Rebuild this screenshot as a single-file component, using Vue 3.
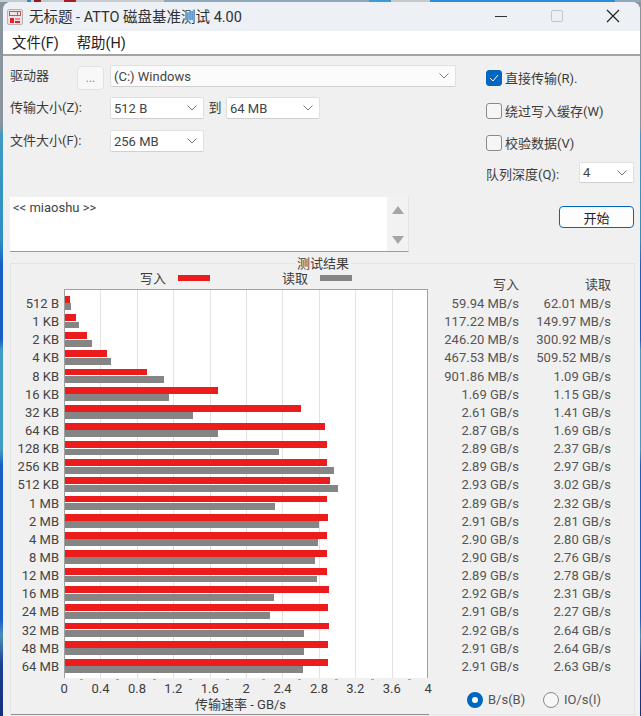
<template>
  <div class="desktop">
    <div class="window">
      <!-- 标题栏 -->
      <div class="titlebar">
        <svg class="app-icon" width="16" height="16" viewBox="0 0 16 16">
          <rect x="0.5" y="0.5" width="15" height="15" rx="1.5" fill="#e9e4e4" stroke="#b9b4b4" />
          <rect x="2" y="2" width="12" height="5" fill="#c9555a" />
          <rect x="3" y="3" width="7" height="3" fill="#f0e4e4" />
          <rect x="11" y="3" width="2" height="3" fill="#f0e4e4" />
          <rect x="3" y="9" width="4" height="5" fill="#e3222b" />
          <rect x="8" y="9" width="5" height="2" fill="#e98a90" />
          <rect x="8" y="12" width="5" height="2" fill="#e3222b" />
        </svg>
        <span class="title-text">无标题 - ATTO 磁盘基准测试 4.00</span>
        <div class="win-buttons">
          <svg width="14" height="14" viewBox="0 0 14 14"><path d="M1 7.5H13" stroke="#333" stroke-width="1.2" fill="none" /></svg>
          <svg width="14" height="14" viewBox="0 0 14 14"><rect x="1.5" y="1.5" width="11" height="11" rx="1.5" stroke="#c2c5c9" fill="none" /></svg>
          <svg width="14" height="14" viewBox="0 0 14 14"><path d="M1 1L13 13M13 1L1 13" stroke="#222" stroke-width="1.2" fill="none" /></svg>
        </div>
      </div>

      <div class="menubar">
        <span>文件(F)</span>
        <span>帮助(H)</span>
      </div>

      <div class="body">
        <div class="top">
          <!-- 左侧表单 -->
          <div class="form">
            <div class="row first">
              <label class="lbl-short">驱动器</label>
              <button class="dots">...</button>
              <div class="select drive">
                <span>(C:) Windows</span>
                <svg class="chev" width="10" height="6" viewBox="0 0 10 6"><path d="M0.5 0.5L5 5L9.5 0.5" /></svg>
              </div>
            </div>
            <div class="row second">
              <label class="lbl">传输大小(Z):</label>
              <div class="select small">
                <span>512 B</span>
                <svg class="chev" width="10" height="6" viewBox="0 0 10 6"><path d="M0.5 0.5L5 5L9.5 0.5" /></svg>
              </div>
              <span class="to">到</span>
              <div class="select small">
                <span>64 MB</span>
                <svg class="chev" width="10" height="6" viewBox="0 0 10 6"><path d="M0.5 0.5L5 5L9.5 0.5" /></svg>
              </div>
            </div>
            <div class="row third">
              <label class="lbl">文件大小(F):</label>
              <div class="select small">
                <span>256 MB</span>
                <svg class="chev" width="10" height="6" viewBox="0 0 10 6"><path d="M0.5 0.5L5 5L9.5 0.5" /></svg>
              </div>
            </div>
            <div class="desc">
              <div class="desc-text">&lt;&lt; miaoshu &gt;&gt;</div>
              <div class="scroll">
                <svg width="12" height="8" viewBox="0 0 12 8"><path d="M6 0L12 8H0Z" fill="#a6a6a6" /></svg>
                <svg width="12" height="8" viewBox="0 0 12 8"><path d="M0 0H12L6 8Z" fill="#a6a6a6" /></svg>
              </div>
            </div>
          </div>

          <!-- 右侧选项 -->
          <div class="options">
            <div class="check-row one">
              <span class="box checked">
                <svg width="10" height="8" viewBox="0 0 10 8"><path d="M1 4L4 7L9 1" stroke="#fff" stroke-width="1" fill="none" /></svg>
              </span>
              <span class="check-text">直接传输(R).</span>
            </div>
            <div class="check-row two">
              <span class="box"></span>
              <span class="check-text">绕过写入缓存(W)</span>
            </div>
            <div class="check-row three">
              <span class="box"></span>
              <span class="check-text">校验数据(V)</span>
            </div>
            <div class="queue">
              <span>队列深度(Q):</span>
              <div class="select tiny">
                <span>4</span>
                <svg class="chev" width="10" height="6" viewBox="0 0 10 6"><path d="M0.5 0.5L5 5L9.5 0.5" /></svg>
              </div>
            </div>
            <button class="start">开始</button>
          </div>
        </div>

        <!-- 测试结果 -->
        <div class="group">
          <span class="group-title">测试结果</span>
          <div class="chart">
            <div class="legend">
              <span>写入</span>
              <i class="swatch write"></i>
              <span class="legend-read">读取</span>
              <i class="swatch read"></i>
            </div>
            <div class="chart-main">
              <div class="labels">
                <div v-for="r in rows" :key="r.size" class="size-label">{{ r.size }}</div>
              </div>
              <div class="plot">
                <div v-for="r in rows" :key="r.size" class="bar-row">
                  <div class="bar write" :style="{ width: pct(r.w) }"></div>
                  <div class="bar read" :style="{ width: pct(r.r) }"></div>
                </div>
              </div>
            </div>
            <div class="tick-marks"></div>
            <div class="axis">
              <span v-for="t in ticks" :key="t">{{ t }}</span>
            </div>
            <div class="axis-title">传输速率 - GB/s</div>
          </div>

          <div class="results">
            <div class="res-row res-head">
              <span>写入</span>
              <span>读取</span>
            </div>
            <div v-for="r in rows" :key="r.size" class="res-row">
              <span>{{ r.wText }}</span>
              <span>{{ r.rText }}</span>
            </div>
            <div class="units">
              <span class="radio on"></span>
              <span class="unit-text">B/s(B)</span>
              <span class="radio"></span>
              <span class="unit-text">IO/s(I)</span>
            </div>
          </div>
        </div>
      </div>
    </div>
  </div>
</template>

<script setup>
const ticks = ['0', '0.4', '0.8', '1.2', '1.6', '2', '2.4', '2.8', '3.2', '3.6', '4'];

// 数值单位 GB/s，用来算柱子长度
const rows = [
  { size: '512 B', w: 0.0599, r: 0.062, wText: '59.94 MB/s', rText: '62.01 MB/s' },
  { size: '1 KB', w: 0.117, r: 0.15, wText: '117.22 MB/s', rText: '149.97 MB/s' },
  { size: '2 KB', w: 0.246, r: 0.301, wText: '246.20 MB/s', rText: '300.92 MB/s' },
  { size: '4 KB', w: 0.468, r: 0.51, wText: '467.53 MB/s', rText: '509.52 MB/s' },
  { size: '8 KB', w: 0.902, r: 1.09, wText: '901.86 MB/s', rText: '1.09 GB/s' },
  { size: '16 KB', w: 1.69, r: 1.15, wText: '1.69 GB/s', rText: '1.15 GB/s' },
  { size: '32 KB', w: 2.61, r: 1.41, wText: '2.61 GB/s', rText: '1.41 GB/s' },
  { size: '64 KB', w: 2.87, r: 1.69, wText: '2.87 GB/s', rText: '1.69 GB/s' },
  { size: '128 KB', w: 2.89, r: 2.37, wText: '2.89 GB/s', rText: '2.37 GB/s' },
  { size: '256 KB', w: 2.89, r: 2.97, wText: '2.89 GB/s', rText: '2.97 GB/s' },
  { size: '512 KB', w: 2.93, r: 3.02, wText: '2.93 GB/s', rText: '3.02 GB/s' },
  { size: '1 MB', w: 2.89, r: 2.32, wText: '2.89 GB/s', rText: '2.32 GB/s' },
  { size: '2 MB', w: 2.91, r: 2.81, wText: '2.91 GB/s', rText: '2.81 GB/s' },
  { size: '4 MB', w: 2.9, r: 2.8, wText: '2.90 GB/s', rText: '2.80 GB/s' },
  { size: '8 MB', w: 2.9, r: 2.76, wText: '2.90 GB/s', rText: '2.76 GB/s' },
  { size: '12 MB', w: 2.89, r: 2.78, wText: '2.89 GB/s', rText: '2.78 GB/s' },
  { size: '16 MB', w: 2.92, r: 2.31, wText: '2.92 GB/s', rText: '2.31 GB/s' },
  { size: '24 MB', w: 2.91, r: 2.27, wText: '2.91 GB/s', rText: '2.27 GB/s' },
  { size: '32 MB', w: 2.92, r: 2.64, wText: '2.92 GB/s', rText: '2.64 GB/s' },
  { size: '48 MB', w: 2.91, r: 2.64, wText: '2.91 GB/s', rText: '2.64 GB/s' },
  { size: '64 MB', w: 2.91, r: 2.63, wText: '2.91 GB/s', rText: '2.63 GB/s' }
];

const pct = (v) => (v / 4) * 100 + '%';
</script>

<style>
html,
body {
  margin: 0;
  background: #3f8fd0;
}
</style>

<style scoped>
.desktop {
  width: 641px;
  height: 716px;
  box-sizing: border-box;
  padding: 2px 1px 0 3px;
  overflow: hidden;
  /* 窗口后面露出来的桌面：顶上一条、左边一条 */
  background:
    linear-gradient(to right, #c4ccd2 0 27px, #2a86d0 27px 31px, #c4ccd2 31px 34px, #8e1c22 34px 41px, #c4ccd2 41px 64px, #a81c22 64px 76px, #c4ccd2 76px 110px, #c9cbcb 110px 164px, #8fa8ba 164px 369px, #3c9ad8 369px 391px, #c9c9c9 391px 430px, #2a8fd8 430px 615px, #8fa8ba 615px) top / 100% 2px no-repeat,
    linear-gradient(to bottom, #8a949c 0 125px, #3f9ac4 135px, #2f8fc0 240px, #1a5fc8 265px, #1a5fc8 340px, #3f9ac4 350px, #3f9ac4 450px, #1a5fc8 465px, #1a5fc8 620px, #4a90b8 635px, #1a3f90 665px, #14307c 716px);
  font-family: Roboto, "Noto Sans CJK SC", sans-serif;
  font-size: 13px;
  color: #3c3c3c;
}

.window {
  height: 714px;
  border-radius: 8px 8px 0 0;
  overflow: hidden;
  background: #f0f0f0;
}

.titlebar {
  height: 29px;
  display: flex;
  align-items: center;
  padding-left: 4px;
  background: #edf1f6;
}

.app-icon {
  margin-top: 1px;
}

.title-text {
  margin: 0 0 3px 6px;
  font-size: 14.5px;
  color: #303030;
}

.win-buttons {
  margin-left: auto;
  margin-bottom: 2px;
  display: flex;
  gap: 42px;
  padding-right: 20px;
}

.menubar {
  display: flex;
  align-items: center;
  gap: 18px;
  padding: 0 0 2px 9px;
  height: 21px;
  background: #fff;
  border-bottom: 2px solid #a3a3a3;
  font-size: 14.4px;
  color: #222;
}

.body {
  padding: 9px 0 0 7px;
}

.top {
  display: flex;
  gap: 30px;
}

.form {
  width: 446px;
}

.row {
  display: flex;
  align-items: flex-start;
}

.row.first {
  height: 25px;
}

.row.second {
  margin-top: 7px;
}

.row.third {
  margin-top: 11px;
}

.lbl,
.lbl-short {
  line-height: 21px;
  white-space: nowrap;
}

.lbl {
  width: 100px;
}

.lbl-short {
  width: 67px;
}

.dots {
  width: 27px;
  height: 24px;
  margin: 1px 6px 0 0;
  padding: 0;
  border: 1px solid #e2e2e2;
  border-radius: 4px;
  background: #f8f8f8;
  font: 12px Roboto, sans-serif;
  color: #888;
}

.select {
  height: 22px;
  box-sizing: border-box;
  display: flex;
  align-items: center;
  justify-content: space-between;
  padding: 0 6px 0 3px;
  background: #fff;
  border: 1px solid #e0e0e0;
  border-bottom-color: #cfcfcf;
  border-radius: 2px;
  color: #444;
}

.select.drive {
  width: 346px;
  background: #fbfbfb;
}

.select.small {
  width: 94px;
}

.select.tiny {
  width: 55px;
  height: 21px;
}

.chev path {
  fill: none;
  stroke: #777;
  stroke-width: 1;
}

.to {
  width: 22px;
  text-align: center;
  line-height: 22px;
}

.desc {
  margin-top: 45px;
  width: 399px;
  height: 55px;
  box-sizing: border-box;
  display: flex;
  justify-content: space-between;
  background: #fff;
  border-bottom: 1px solid #9c9c9c;
  border-right: 1px solid #e3e3e3;
}

.desc-text {
  padding: 3px 0 0 3px;
  color: #444;
}

.scroll {
  width: 21px;
  display: flex;
  flex-direction: column;
  align-items: center;
  justify-content: space-between;
  padding: 9px 0 7px;
  box-sizing: border-box;
  background: #f2f2f2;
}

.options {
  width: 148px;
  display: flex;
  flex-direction: column;
}

.check-row {
  height: 16px;
  display: flex;
  align-items: center;
  gap: 3px;
  white-space: nowrap;
}

.check-text {
  margin-top: -2px;
}

.check-row.one {
  margin-top: 5px;
}

.check-row.two {
  margin-top: 17px;
}

.check-row.three {
  margin-top: 16px;
}

.box {
  width: 16px;
  height: 16px;
  box-sizing: border-box;
  display: flex;
  align-items: center;
  justify-content: center;
  border: 1px solid #8a8a8a;
  border-radius: 3px;
  background: #f6f6f6;
}

.box.checked {
  background: #0067c0;
  border-color: #0067c0;
}

.queue {
  margin-top: 11px;
  display: flex;
  align-items: flex-start;
  justify-content: space-between;
  line-height: 26px;
}

.start {
  align-self: flex-end;
  width: 75px;
  height: 22px;
  margin-top: 18px;
  padding: 0;
  background: #fdfdfd;
  border: 1px solid #0067c0;
  border-radius: 4px;
  font: 13px Roboto, "Noto Sans CJK SC", sans-serif;
  color: #222;
}

.group {
  position: relative;
  width: 625px;
  height: 452px;
  margin-top: 11px;
  box-sizing: border-box;
  display: flex;
  border: 1px solid #e4e4e4;
}

.group-title {
  position: absolute;
  left: 284px;
  top: -9px;
  padding: 0 2px;
  line-height: 17px;
  background: #f0f0f0;
}

.chart {
  width: 418px;
  height: 451px;
  box-sizing: border-box;
  border-bottom: 1px solid #8f8f8f;
}

.legend {
  height: 25px;
  box-sizing: border-box;
  display: flex;
  align-items: center;
  padding: 1px 0 0 129px;
}

.swatch {
  width: 32px;
  height: 6px;
  margin: 1px 0 0 12px;
}

.swatch.write {
  background: #ec1c1c;
}

.swatch.read {
  background: #858585;
}

.legend-read {
  margin-left: 72px;
}

.chart-main {
  display: flex;
}

.labels {
  width: 53px;
  box-sizing: border-box;
  padding: 6px 5px 0 0;
}

.size-label {
  height: 18.15px;
  line-height: 18.15px;
  text-align: right;
  white-space: nowrap;
  color: #444;
}

.plot {
  width: 364px;
  height: 389px;
  box-sizing: border-box;
  padding-top: 6px;
  border: 1px solid #a0a0a0;
  border-bottom: 0;
  background: repeating-linear-gradient(to right, transparent 0, transparent 35.4px, #e2e2e2 35.4px, #e2e2e2 36.4px) #fff;
}

.bar-row {
  height: 18.15px;
  box-sizing: border-box;
}

.bar {
  height: 6.9px;
}

.bar.write {
  background: #ec1c1c;
}

.bar.read {
  margin-top: 0.5px;
  background: #858585;
}

.tick-marks {
  height: 1px;
  margin: 1px 0 0 53px;
  width: 364px;
  background: repeating-linear-gradient(to right, transparent 0, transparent 16px, #a8a8a8 16px, #a8a8a8 19px, transparent 19px, transparent 36.4px);
}

.axis {
  display: grid;
  grid-template-columns: repeat(11, 36.4px);
  margin-left: 35px;
  height: 17px;
  line-height: 17px;
  text-align: center;
}

.axis-title {
  line-height: 16px;
  padding-left: 184px;
  white-space: nowrap;
}

.results {
  flex: 1;
  padding-top: 13px;
  color: #555;
}

.res-row {
  display: grid;
  grid-template-columns: 90px 92px;
  height: 18.15px;
  line-height: 18.15px;
  text-align: right;
  white-space: nowrap;
}

.res-head {
  height: 18px;
  line-height: 15px;
  color: #444;
}

.units {
  display: flex;
  align-items: center;
  height: 16px;
  margin: 16px 0 0 38px;
  white-space: nowrap;
}

.radio {
  width: 16px;
  height: 16px;
  box-sizing: border-box;
  border: 1px solid #8a8a8a;
  border-radius: 50%;
  background: #f6f6f6;
}

.radio.on {
  border: 5px solid #0067c0;
  background: #fff;
}

.unit-text {
  margin-left: 5px;
  width: 55px;
}
</style>
